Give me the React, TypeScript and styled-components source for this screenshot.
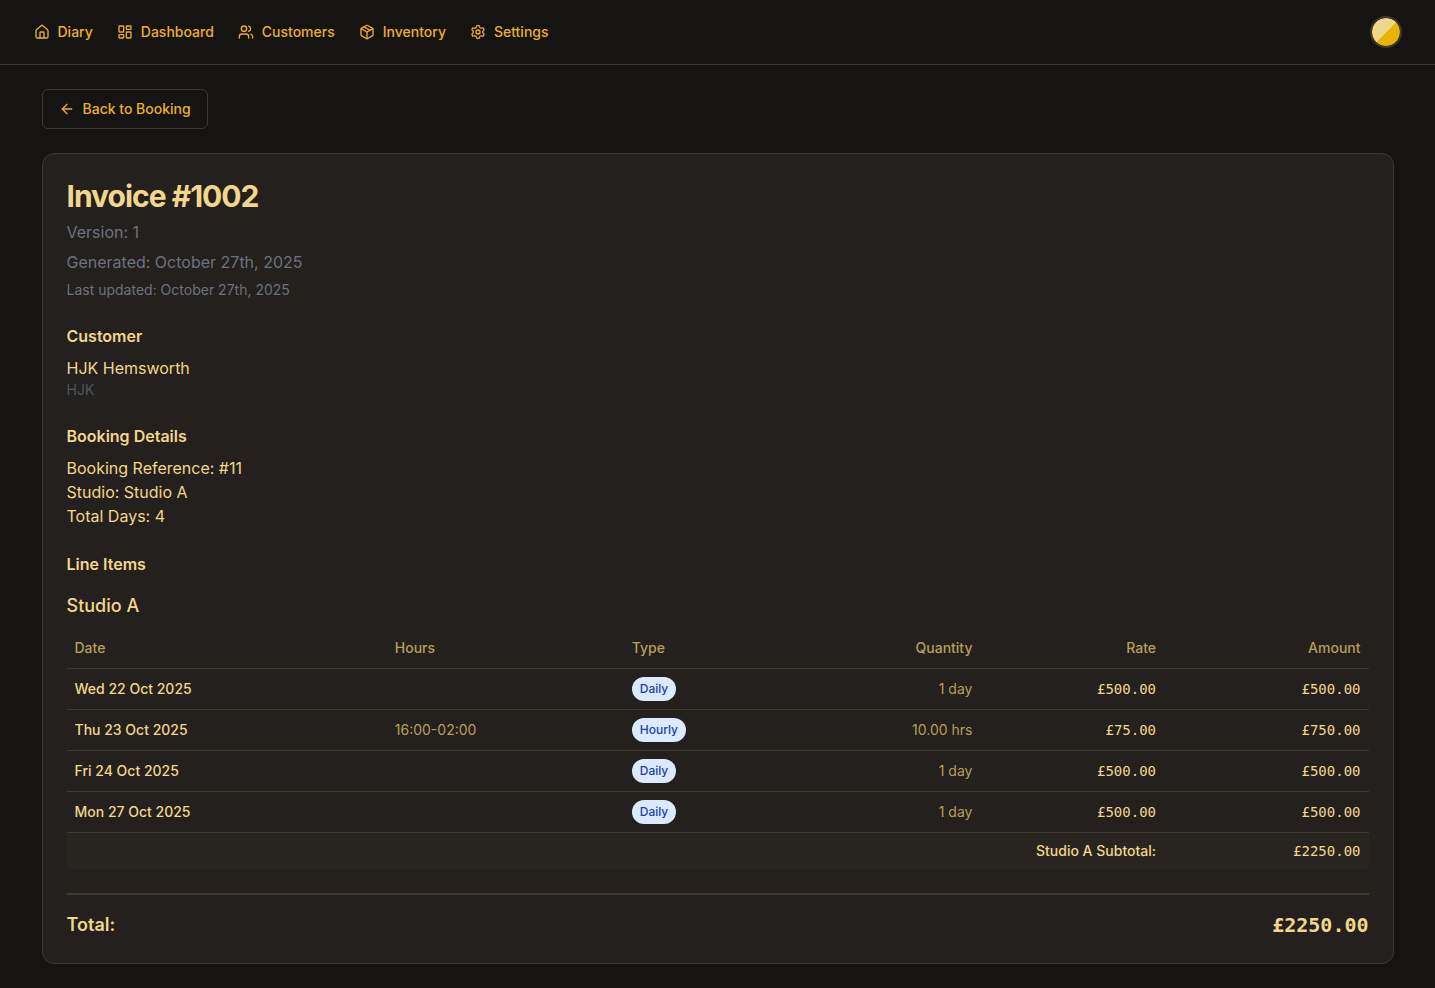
import React from 'react';
import styled, { createGlobalStyle } from 'styled-components';
import { ArrowLeft, House, LayoutDashboard, Package, Settings, Users } from 'lucide-react';

const color = {
  page: '#161412',
  card: '#24201d',
  stripe: '#282520',
  line: '#3e382f',
  accent: '#eab02c',
  text: '#f0d78c',
  gold: '#b69f5a',
  slate: '#6b7280',
  slateDark: '#4b5563',
};

const GlobalStyle = createGlobalStyle`
  *, *::before, *::after { box-sizing: border-box; }
  body {
    margin: 0;
    background: ${color.page};
    color: ${color.text};
    font-family: Inter, "Liberation Sans", sans-serif;
    font-size: 16px;
    line-height: 24px;
  }
  h1, h2, h3, p { margin: 0; }
`;

const TopBar = styled.header`
  border-bottom: 1px solid ${color.line};
`;

const TopBarInner = styled.div`
  display: flex;
  align-items: center;
  justify-content: space-between;
  max-width: 1400px;
  height: 64px;
  margin: 0 auto;
  padding: 0 16px;
`;

const Nav = styled.nav`
  display: flex;
  gap: 24px;
`;

const NavLink = styled.a`
  display: flex;
  align-items: center;
  gap: 8px;
  color: ${color.accent};
  font-size: 14px;
  font-weight: 500;
  line-height: 20px;
  text-decoration: none;
`;

const Avatar = styled.button`
  width: 32px;
  height: 32px;
  padding: 0;
  border: 2px solid ${color.line};
  border-radius: 50%;
  background: linear-gradient(135deg, #f0d78c 50%, #eab308 50%) padding-box;
  cursor: pointer;
`;

const Main = styled.main`
  display: flex;
  flex-direction: column;
  align-items: flex-start;
  gap: 24px;
  max-width: 1400px;
  margin: 0 auto;
  padding: 24px;
`;

const BackButton = styled.button`
  display: inline-flex;
  align-items: center;
  gap: 8px;
  height: 40px;
  padding: 0 16px;
  border: 1px solid ${color.line};
  border-radius: 6px;
  background: transparent;
  color: ${color.accent};
  font: 500 14px/20px Inter, "Liberation Sans", sans-serif;
  cursor: pointer;
`;

const Card = styled.article`
  display: flex;
  flex-direction: column;
  gap: 24px;
  width: 100%;
  padding: 24px;
  border: 1px solid ${color.line};
  border-radius: 12px;
  background: ${color.card};
`;

const CardHeader = styled.div`
  display: flex;
  flex-direction: column;
  gap: 6px;
`;

const Title = styled.h1`
  font-size: 30px;
  font-weight: 700;
  line-height: 36px;
  letter-spacing: -1px;
`;

const Meta = styled.p<{ $small?: boolean }>`
  color: ${color.slate};
  font-size: ${(p) => (p.$small ? '14px' : '16px')};
  line-height: ${(p) => (p.$small ? '20px' : '24px')};
`;

const SectionTitle = styled.h2`
  margin: 0 0 8px;
  font-size: 16px;
  font-weight: 600;
  line-height: 24px;
`;

const Company = styled.p`
  color: ${color.slateDark};
  font-size: 14px;
  line-height: 20px;
`;

const GroupTitle = styled.h3`
  margin: 16px 0 8px;
  font-size: 18px;
  font-weight: 500;
  line-height: 28px;
`;

const Table = styled.table`
  width: 100%;
  table-layout: fixed;
  border-collapse: separate;
  border-spacing: 0;
  font-size: 14px;
  line-height: 20px;
`;

const Col = styled.col<{ $share: string }>`
  width: ${(p) => p.$share};
`;

const HeadCell = styled.th<{ $end?: boolean }>`
  height: 41px;
  padding: 0 8px;
  border-bottom: 1px solid ${color.line};
  color: ${color.gold};
  font-weight: 500;
  text-align: ${(p) => (p.$end ? 'right' : 'left')};
`;

const Cell = styled.td<{ $end?: boolean; $muted?: boolean }>`
  height: 41px;
  padding: 0 8px;
  border-bottom: 1px solid ${color.line};
  color: ${(p) => (p.$muted ? color.gold : color.text)};
  font-weight: ${(p) => (p.$muted ? 400 : 500)};
  text-align: ${(p) => (p.$end ? 'right' : 'left')};
`;

const Mono = styled.span`
  display: block;
  font-family: "DejaVu Sans Mono", "Liberation Mono", monospace;
`;

const Badge = styled.span`
  display: block;
  width: fit-content;
  padding: 4px 8px;
  border-radius: 12px;
  background: #dbeafe;
  color: #1e40af;
  font-size: 12px;
  font-weight: 500;
  line-height: 16px;
`;

const SubtotalCell = styled.td`
  padding: 8px;
  background: ${color.stripe};
  font-weight: 500;
  text-align: right;
`;

const TotalRow = styled.div`
  display: flex;
  align-items: center;
  justify-content: space-between;
  padding-top: 16px;
  border-top: 2px solid ${color.line};
  font-size: 18px;
  font-weight: 600;
  line-height: 28px;
`;

const TotalAmount = styled.span`
  font-family: "DejaVu Sans Mono", "Liberation Mono", monospace;
  font-size: 20px;
  font-weight: 700;
`;

const links = [
  { label: 'Diary', Icon: House },
  { label: 'Dashboard', Icon: LayoutDashboard },
  { label: 'Customers', Icon: Users },
  { label: 'Inventory', Icon: Package },
  { label: 'Settings', Icon: Settings },
];

const items = [
  { date: 'Wed 22 Oct 2025', hours: '', type: 'Daily', quantity: '1 day', rate: '£500.00', amount: '£500.00' },
  { date: 'Thu 23 Oct 2025', hours: '16:00-02:00', type: 'Hourly', quantity: '10.00 hrs', rate: '£75.00', amount: '£750.00' },
  { date: 'Fri 24 Oct 2025', hours: '', type: 'Daily', quantity: '1 day', rate: '£500.00', amount: '£500.00' },
  { date: 'Mon 27 Oct 2025', hours: '', type: 'Daily', quantity: '1 day', rate: '£500.00', amount: '£500.00' },
];

export default function App() {
  return (
    <>
      <GlobalStyle />
      <TopBar>
        <TopBarInner>
          <Nav>
            {links.map(({ label, Icon }) => (
              <NavLink key={label} href={`#${label.toLowerCase()}`}>
                <Icon size={16} />
                {label}
              </NavLink>
            ))}
          </Nav>
          <Avatar type="button" aria-label="Account" />
        </TopBarInner>
      </TopBar>
      <Main>
        <BackButton type="button">
          <ArrowLeft size={16} />
          Back to Booking
        </BackButton>
        <Card>
          <CardHeader>
            <Title>Invoice #1002</Title>
            <Meta>Version: 1</Meta>
            <Meta>Generated: October 27th, 2025</Meta>
            <Meta $small>Last updated: October 27th, 2025</Meta>
          </CardHeader>
          <section>
            <SectionTitle>Customer</SectionTitle>
            <p>HJK Hemsworth</p>
            <Company>HJK</Company>
          </section>
          <section>
            <SectionTitle>Booking Details</SectionTitle>
            <p>Booking Reference: #11</p>
            <p>Studio: Studio A</p>
            <p>Total Days: 4</p>
          </section>
          <section>
            <SectionTitle>Line Items</SectionTitle>
            <GroupTitle>Studio A</GroupTitle>
            <Table>
              <colgroup>
                <Col $share="24.6%" />
                <Col $share="18.2%" />
                <Col $share="13.7%" />
                <Col $share="13.7%" />
                <Col $share="14.1%" />
                <Col $share="15.7%" />
              </colgroup>
              <thead>
                <tr>
                  <HeadCell scope="col">Date</HeadCell>
                  <HeadCell scope="col">Hours</HeadCell>
                  <HeadCell scope="col">Type</HeadCell>
                  <HeadCell scope="col" $end>Quantity</HeadCell>
                  <HeadCell scope="col" $end>Rate</HeadCell>
                  <HeadCell scope="col" $end>Amount</HeadCell>
                </tr>
              </thead>
              <tbody>
                {items.map((item) => (
                  <tr key={item.date}>
                    <Cell>{item.date}</Cell>
                    <Cell $muted>{item.hours}</Cell>
                    <Cell><Badge>{item.type}</Badge></Cell>
                    <Cell $end $muted>{item.quantity}</Cell>
                    <Cell $end><Mono>{item.rate}</Mono></Cell>
                    <Cell $end><Mono>{item.amount}</Mono></Cell>
                  </tr>
                ))}
              </tbody>
              <tfoot>
                <tr>
                  <SubtotalCell colSpan={5}>Studio A Subtotal:</SubtotalCell>
                  <SubtotalCell><Mono>£2250.00</Mono></SubtotalCell>
                </tr>
              </tfoot>
            </Table>
          </section>
          <TotalRow>
            <span>Total:</span>
            <TotalAmount>£2250.00</TotalAmount>
          </TotalRow>
        </Card>
      </Main>
    </>
  );
}
